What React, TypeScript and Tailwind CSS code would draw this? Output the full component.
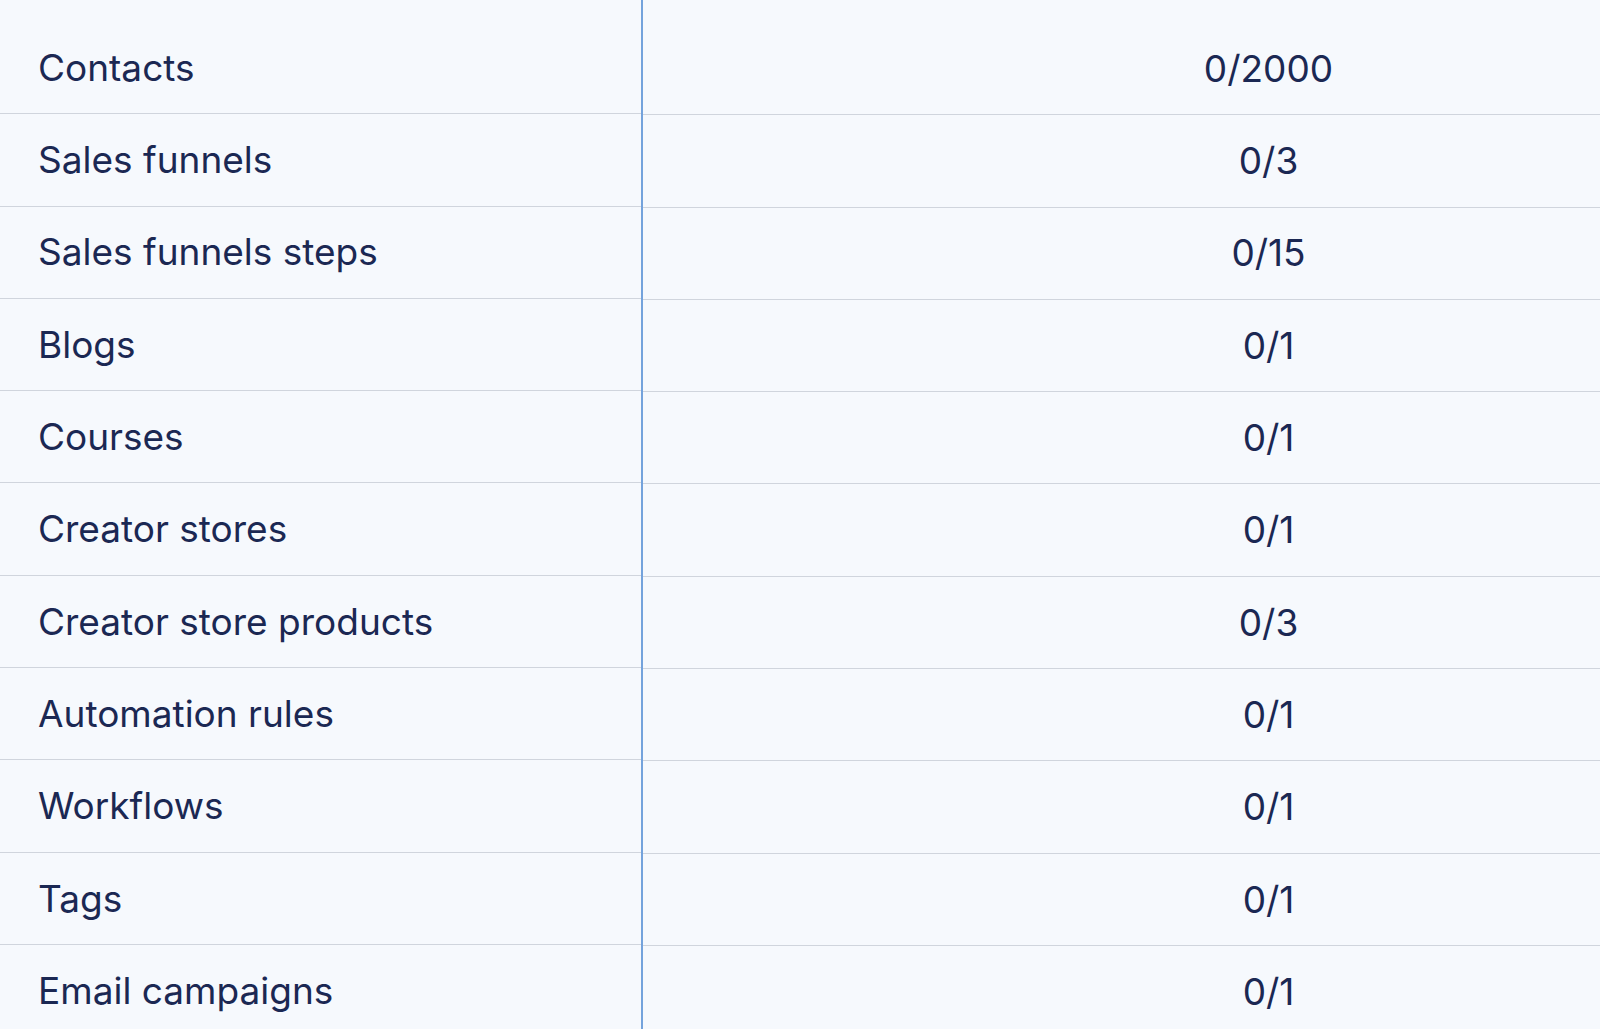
import React from "react";

const rows: [string, string][] = [
  ["Contacts", "0/2000"],
  ["Sales funnels", "0/3"],
  ["Sales funnels steps", "0/15"],
  ["Blogs", "0/1"],
  ["Courses", "0/1"],
  ["Creator stores", "0/1"],
  ["Creator store products", "0/3"],
  ["Automation rules", "0/1"],
  ["Workflows", "0/1"],
  ["Tags", "0/1"],
  ["Email campaigns", "0/1"],
];

export default function App() {
  return (
    <div
      className="w-[1600px] h-[1029px] overflow-hidden bg-[#f6f9fd] text-[#1b2853]"
      style={{ fontFamily: "Inter, 'Noto Sans', sans-serif" }}
    >
      <div className="flex w-[1894px] pt-[22px]">
        <div className="w-[641px] shrink-0">
          {rows.map(([label], i) => (
            <div
              key={i}
              className="h-[92.3px] flex items-center pl-[38px] border-b-[1.5px] border-[#d0d5dd] text-[37px] font-normal"
            >
              {label}
            </div>
          ))}
        </div>
        <div className="w-[2px] bg-[#74a3dc] shrink-0 -mt-[22px]" />
        <div className="flex-1">
          {rows.map(([, v], i) => (
            <div
              key={i}
              className="h-[92.3px] flex items-center justify-center border-b-[1.5px] border-[#d0d5dd] text-[37px] font-normal translate-y-[1px]"
            >
              {v}
            </div>
          ))}
        </div>
      </div>
    </div>
  );
}
